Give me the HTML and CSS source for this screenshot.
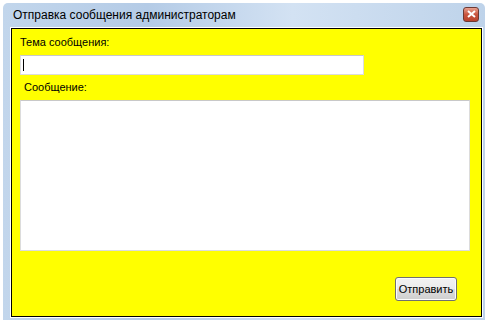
FILE: index.html
```html
<!DOCTYPE html>
<html lang="ru">
<head>
    <meta charset="UTF-8">
    <meta name="viewport" content="width=device-width, initial-scale=1.0">
    <title>Отправка сообщения администраторам</title>
    <link rel="stylesheet" href="styles.css">
</head>
<body>

<div class="window">
    <div class="titlebar">
        <span class="title">Отправка сообщения администраторам</span>
        <span class="close">
            <svg width="9" height="8" viewBox="0 0 9 8">
                <path d="M1 1 L8 7 M8 1 L1 7" stroke="#fff" stroke-width="2"/>
            </svg>
        </span>
    </div>
    <div class="client">
        <div class="label">Тема сообщения:</div>
        <div class="input"><span class="caret"></span></div>
        <div class="label label-msg">Сообщение:</div>
        <div class="textarea"></div>
        <div class="actions">
            <button class="btn">Отправить</button>
        </div>
    </div>
</div>

</body>
</html>
```

FILE: styles.css
```css
body {
    margin: 0;
    background: #fff;
    font-family: "Liberation Sans", Arial, sans-serif;
}
.window {
    margin: 3px 0 0 3px;
    width: 482px;
    height: 317px;
    box-sizing: border-box;
    padding: 0 3px 3px 8px;
    background: linear-gradient(90deg, #c2d6ec 0%, #b4cbe6 30%, #d3e2f3 60%, #bed3ea 100%);
    border-radius: 5px 5px 0 0;
    display: flex;
    flex-direction: column;
}
.titlebar {
    height: 25px;
    display: flex;
    align-items: center;
    justify-content: space-between;
    flex-shrink: 0;
}
.title {
    font-size: 12px;
    color: #000;
    margin-left: 2px;
    margin-top: -2px;
}
.close {
    width: 16px;
    height: 15px;
    box-sizing: border-box;
    border: 1px solid #6d3a34;
    border-radius: 3px;
    background: linear-gradient(#e8a08e, #c9553f 50%, #b8432d);
    display: flex;
    align-items: center;
    justify-content: center;
    margin-right: 3px;
    margin-top: -3px;
}
.client {
    flex: 1;
    background: #ffff00;
    border: 1px solid #000;
    box-shadow: 0 0 0 1px #fff;
    padding: 7px 0 0 8px;
    display: flex;
    flex-direction: column;
    align-items: flex-start;
}
.label {
    font-size: 11px;
    line-height: 13px;
    color: #000;
}
.label-msg {
    margin: 6px 0 0 4px;
}
.input {
    margin-top: 6px;
    width: 344px;
    height: 20px;
    box-sizing: border-box;
    background: #fff;
    border: 1px solid #dcdcdc;
    border-top-color: #c8c8c8;
    padding: 3px 0 0 2px;
}
.caret {
    display: block;
    width: 1px;
    height: 12px;
    background: #000;
}
.textarea {
    margin-top: 6px;
    width: 450px;
    height: 151px;
    box-sizing: border-box;
    background: #fff;
    border: 1px solid #dcdcdc;
    border-top-color: #c8c8c8;
}
.actions {
    align-self: stretch;
    display: flex;
    justify-content: flex-end;
    margin-top: 26px;
    padding-right: 24px;
}
.btn {
    width: 62px;
    height: 24px;
    font-family: "Liberation Sans", Arial, sans-serif;
    font-size: 11px;
    color: #000;
    border: 1px solid #707070;
    border-radius: 3px;
    background: linear-gradient(#f2f2f2 0%, #ebebeb 50%, #dddddd 51%, #cfcfcf 100%);
    box-shadow: inset 0 0 0 1px #fcfcfc;
    padding: 0;
}
```
